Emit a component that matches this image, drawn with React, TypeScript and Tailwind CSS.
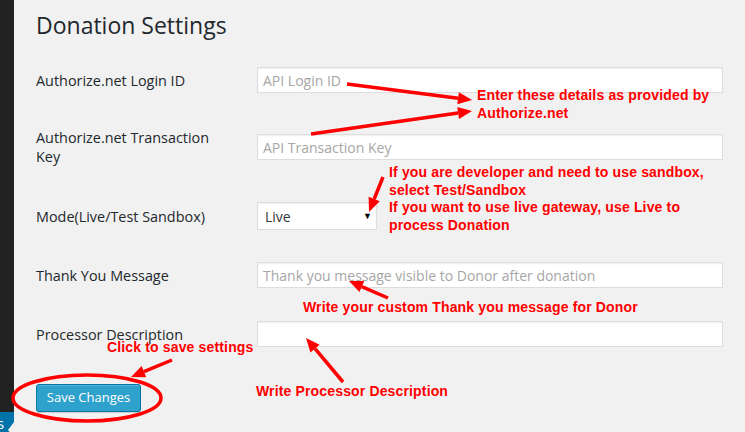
import React from 'react';

const fields = [
  { label: 'Authorize.net Login ID', placeholder: 'API Login ID', gap: 'mt-0' },
  { label: 'Authorize.net Transaction Key', placeholder: 'API Transaction Key', gap: 'mt-[35px]' },
];

const notes = [
  { x: 477, y: 87, lines: ['Enter these details as provided by', 'Authorize.net'] },
  {
    x: 389,
    y: 164,
    lines: [
      'If you are developer and need to use sandbox,',
      'select Test/Sandbox',
      'If you want to use live gateway, use Live to',
      'process Donation',
    ],
  },
  { x: 303, y: 299, lines: ['Write your custom Thank you message for Donor'] },
  { x: 107, y: 339, lines: ['Click to save settings'] },
  { x: 256, y: 383, lines: ['Write Processor Description'] },
];

// tail -> tip, head drawn at tip
const arrows = [
  [347, 84, 472, 100],
  [311, 134, 472, 111],
  [383, 177, 369, 212],
  [388, 298, 349, 281],
  [343, 382, 306, 338],
  [172, 360, 131, 377],
];

function Arrow({ a }: { a: number[] }) {
  const [x1, y1, x2, y2] = a;
  const dx = x2 - x1;
  const dy = y2 - y1;
  const len = Math.hypot(dx, dy);
  const ux = dx / len;
  const uy = dy / len;
  const hl = 14;
  const hw = 6;
  const bx = x2 - ux * hl;
  const by = y2 - uy * hl;
  const pts = `${x2},${y2} ${bx - uy * hw},${by + ux * hw} ${bx + uy * hw},${by - ux * hw}`;
  return (
    <g>
      <line x1={x1} y1={y1} x2={bx} y2={by} stroke="#ff0000" strokeWidth={3.5} />
      <polygon points={pts} fill="#ff0000" />
    </g>
  );
}

function TextInput({ placeholder }: { placeholder: string }) {
  return (
    <div className="h-[26px] w-[466px] border border-[#dddddd] bg-white shadow-[inset_0_1px_2px_rgba(0,0,0,0.07)] flex items-center px-[5px] text-[14px] text-[#a6a6a6]">
      {placeholder}
    </div>
  );
}

export default function App() {
  return (
    <div className="relative h-[432px] w-[745px] overflow-hidden bg-[#f1f1f1] flex font-['Open_Sans',sans-serif]">
      {/* admin sidebar edge */}
      <div className="w-[14px] h-full flex flex-col bg-[#222222]">
        <div className="flex-1" />
        <div className="relative h-[20px] bg-[#0073aa] overflow-hidden">
          <span className="absolute left-[-3px] top-[4px] text-[15px] leading-none text-white">s</span>
          <span className="absolute right-0 top-[10px] w-0 h-0 border-y-[8px] border-y-transparent border-r-[6px] border-r-[#f1f1f1]" />
        </div>
      </div>

      <div className="flex-1 pl-[22px]">
        <h2 className="mt-[9px] text-[23px] leading-[32px] text-[#23282d]">Donation Settings</h2>

        <div className="mt-[26px] flex flex-col text-[14.4px] text-[#23282d]">
          {fields.map((f, i) => (
            <div key={i} className={`flex items-center ${f.gap}`}>
              <div className="w-[221px] pr-[30px] leading-[19px]">{f.label}</div>
              <TextInput placeholder={f.placeholder} />
            </div>
          ))}

          <div className="flex items-center mt-[36px]">
            <div className="w-[221px] leading-[19px]">Mode(Live/Test Sandbox)</div>
            <div className="relative h-[28px] w-[120px] border border-[#dddddd] bg-white shadow-[inset_0_1px_2px_rgba(0,0,0,0.07)] flex items-center pl-[7px] text-[14px] text-[#32373c]">
              Live
              <span className="absolute right-[4px] top-[8px] text-[9px] leading-none text-black">▼</span>
            </div>
          </div>

          <div className="flex items-center mt-[32px]">
            <div className="w-[221px] leading-[19px]">Thank You Message</div>
            <TextInput placeholder="Thank you message visible to Donor after donation" />
          </div>

          <div className="flex items-center mt-[33px]">
            <div className="w-[221px] leading-[19px]">Processor Description</div>
            <TextInput placeholder="" />
          </div>

          <div className="mt-[37px]">
            <button className="h-[28px] w-[105px] rounded-[3px] border border-[#0074a2] bg-[#2ea2cc] text-[13px] text-white shadow-[inset_0_1px_0_rgba(120,200,230,0.5),0_1px_0_rgba(0,0,0,0.15)]">
              Save Changes
            </button>
          </div>
        </div>
      </div>

      {/* annotations */}
      <svg className="absolute inset-0 pointer-events-none" width={745} height={432}>
        <ellipse cx={87} cy={398} rx={74} ry={23} fill="none" stroke="#ff0000" strokeWidth={3.5} />
        {arrows.map((a, i) => (
          <Arrow key={i} a={a} />
        ))}
      </svg>
      {notes.map((n, i) => (
        <div
          key={i}
          className="absolute font-['Liberation_Sans',Arial,sans-serif] font-bold text-[14px] leading-[17.5px] tracking-[0.15px] text-[#ff0000] whitespace-nowrap"
          style={{ left: n.x, top: n.y }}
        >
          {n.lines.map((l, j) => (
            <div key={j}>{l}</div>
          ))}
        </div>
      ))}
    </div>
  );
}
